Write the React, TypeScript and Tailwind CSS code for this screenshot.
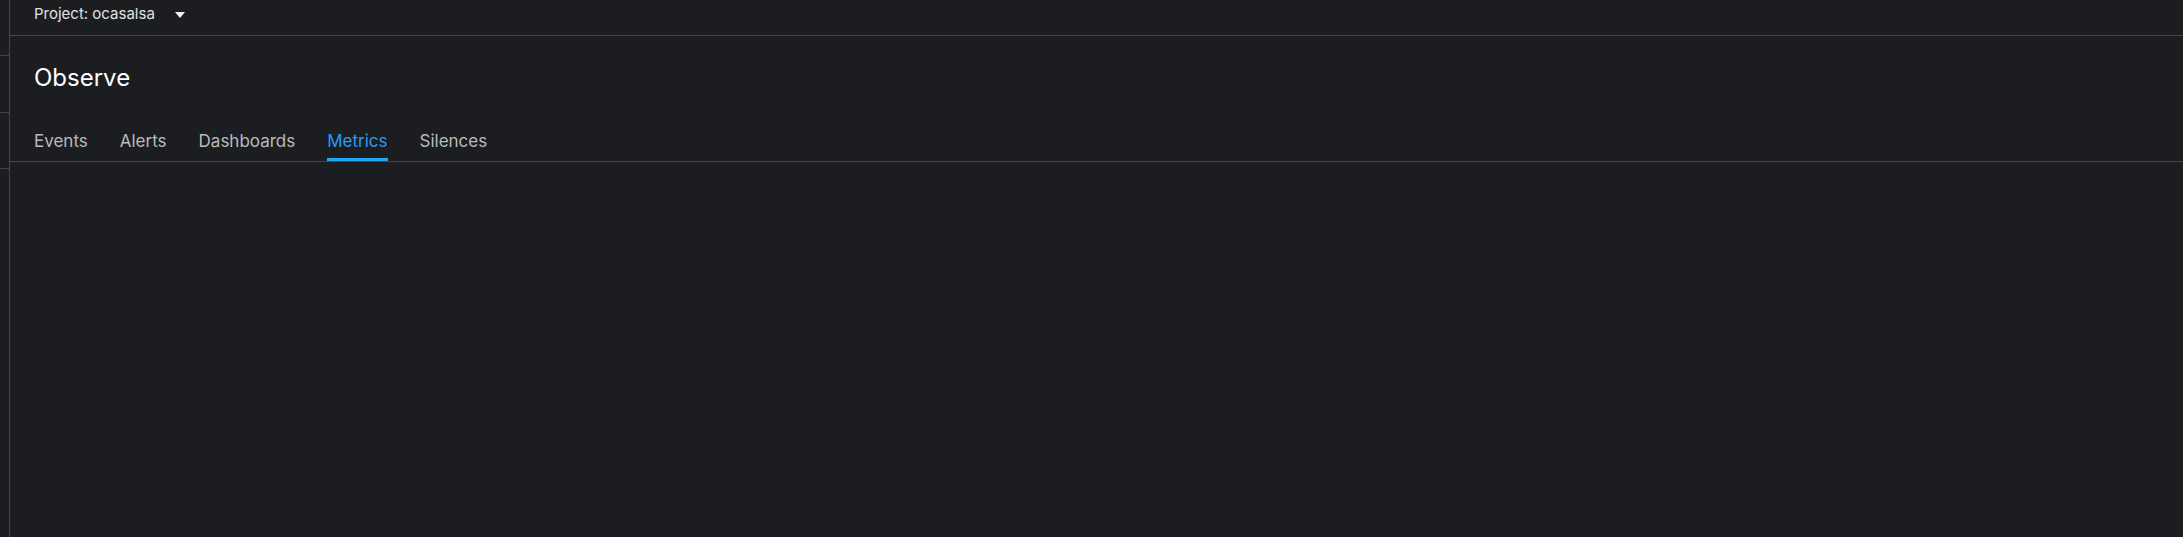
import React from 'react';

const tabs = ['Events', 'Alerts', 'Dashboards', 'Metrics', 'Silences'];

export default function App() {
  const active = 'Metrics';

  return (
    <div className="flex h-[537px] w-full overflow-hidden bg-[#1b1d21] font-['Inter',sans-serif]">
      {/* collapsed nav rail */}
      <aside className="w-[10px] shrink-0 border-r border-[#444548]">
        <div className="h-[56px] border-b border-[#444548]" />
        <div className="h-[57px] border-b border-[#444548]" />
        <div className="h-[56px] border-b border-[#444548]" />
      </aside>

      <main className="flex min-w-0 flex-1 flex-col">
        <div className="flex h-[36px] items-start border-b border-[#444548] pl-[24px] pt-[5px]">
          <button type="button" className="flex items-center gap-[20px] text-[15px] leading-[18px] text-[#e0e0e0]">
            Project: ocasalsa
            <svg width="10" height="6" viewBox="0 0 10 6" className="mt-[1px]">
              <path d="M0 0h10L5 6z" fill="#f0f0f0" />
            </svg>
          </button>
        </div>

        <div className="pl-[24px] pt-[27px]">
          <h1 className="text-[24px] leading-[30px] font-normal text-white">Observe</h1>
        </div>

        <nav className="mt-[25px] flex h-[44px] gap-[32px] border-b border-[#444548] pl-[24px]">
          {tabs.map((t) => (
            <div
              key={t}
              className={`flex items-center border-b-[3px] pt-[7px] text-[17px] ${
                t === active ? 'border-[#1fa7f8] text-[#2b9af3]' : 'border-transparent text-[#b8bbbe]'
              }`}
            >
              {t}
            </div>
          ))}
        </nav>

        <div className="flex-1" />
      </main>
    </div>
  );
}
